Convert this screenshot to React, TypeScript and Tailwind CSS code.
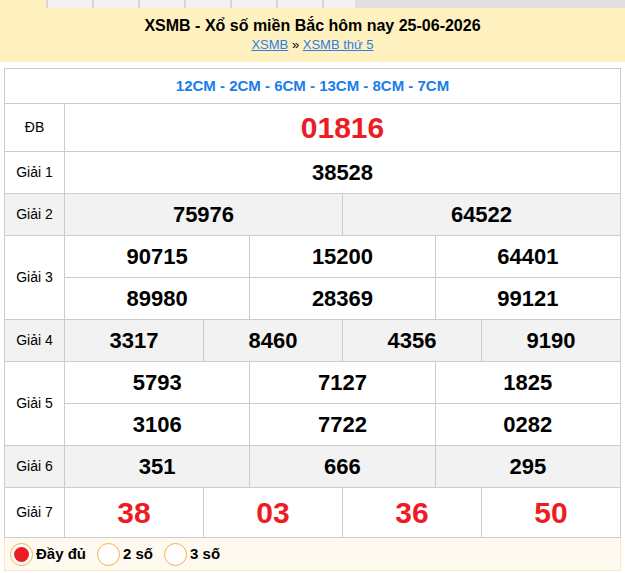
const font = { fontFamily: '"Liberation Sans", Arial, sans-serif' };

type Cell = { v: string; span: number };

const rows: { label: string; gray?: boolean; lines: Cell[][]; red?: boolean; h: string }[] = [
  { label: "ĐB", lines: [[{ v: "01816", span: 12 }]], red: true, h: "h-[48px]" },
  { label: "Giải 1", lines: [[{ v: "38528", span: 12 }]], h: "h-[42px]" },
  { label: "Giải 2", gray: true, lines: [[{ v: "75976", span: 6 }, { v: "64522", span: 6 }]], h: "h-[42px]" },
  {
    label: "Giải 3",
    lines: [
      [{ v: "90715", span: 4 }, { v: "15200", span: 4 }, { v: "64401", span: 4 }],
      [{ v: "89980", span: 4 }, { v: "28369", span: 4 }, { v: "99121", span: 4 }],
    ],
    h: "h-[42px]",
  },
  {
    label: "Giải 4",
    gray: true,
    lines: [[{ v: "3317", span: 3 }, { v: "8460", span: 3 }, { v: "4356", span: 3 }, { v: "9190", span: 3 }]],
    h: "h-[42px]",
  },
  {
    label: "Giải 5",
    lines: [
      [{ v: "5793", span: 4 }, { v: "7127", span: 4 }, { v: "1825", span: 4 }],
      [{ v: "3106", span: 4 }, { v: "7722", span: 4 }, { v: "0282", span: 4 }],
    ],
    h: "h-[42px]",
  },
  {
    label: "Giải 6",
    gray: true,
    lines: [[{ v: "351", span: 4 }, { v: "666", span: 4 }, { v: "295", span: 4 }]],
    h: "h-[42px]",
  },
  {
    label: "Giải 7",
    red: true,
    lines: [[{ v: "38", span: 3 }, { v: "03", span: 3 }, { v: "36", span: 3 }, { v: "50", span: 3 }]],
    h: "h-[50px]",
  },
];

function Radio({ checked, label }: { checked?: boolean; label: string }) {
  return (
    <label className="flex items-center gap-[3px] mr-[11px]">
      <span className="w-[23px] h-[23px] rounded-full border border-[#f5b041] bg-white flex items-center justify-center">
        {checked && <span className="w-[15px] h-[15px] rounded-full bg-[#ed1c24]" />}
      </span>
      <span className="text-[15px] font-bold text-black">{label}</span>
    </label>
  );
}

export default function App() {
  return (
    <div className="w-[625px] h-[573px] bg-white overflow-hidden" style={font}>
      {/* tabs strip */}
      <div className="flex h-[8px] bg-[#e0e0e0]">
        <div className="w-[46px] bg-[#fff1bf]" />
        {[46, 46, 46, 46, 46, 46, 33].map((w, i) => (
          <div key={i} style={{ width: w }} className="bg-[#f2f2f2] border-l-[2px] border-[#d6d6d6]" />
        ))}
      </div>

      {/* header */}
      <div className="bg-[#fff1bf] h-[54px] flex flex-col items-center pt-[7px]">
        <h1 className="text-[16px] font-bold text-black leading-[22px]">XSMB - Xổ số miền Bắc hôm nay 25-06-2026</h1>
        <div className="text-[13px] leading-[16px] text-black">
          <a className="text-[#2b7de9] underline">XSMB</a> » <a className="text-[#2b7de9] underline">XSMB thứ 5</a>
        </div>
      </div>

      <div className="px-[4px] pt-[6px]">
        <table className="w-full border-collapse table-fixed">
          <colgroup>
            <col className="w-[60px]" />
            {Array.from({ length: 12 }).map((_, i) => (
              <col key={i} />
            ))}
          </colgroup>
          <tbody>
            <tr className="h-[35px]">
              <td colSpan={13} className="border border-[#cccccc] text-center text-[15px] font-bold text-[#1a7de8]">
                12CM - 2CM - 6CM - 13CM - 8CM - 7CM
              </td>
            </tr>
            {rows.map((r) =>
              r.lines.map((line, li) => (
                <tr key={r.label + li} className={`${r.h} ${r.gray ? "bg-[#f2f2f2]" : "bg-white"}`}>
                  {li === 0 && (
                    <td rowSpan={r.lines.length} className="border border-[#cccccc] text-center text-[14px] text-black">
                      {r.label}
                    </td>
                  )}
                  {line.map((c, ci) => (
                    <td
                      key={ci}
                      colSpan={c.span}
                      className={`border border-[#cccccc] text-center font-bold p-0 ${
                        r.red ? "text-[#ed1c24] text-[30px]" : "text-black text-[22px]"
                      }`}
                    >
                      {c.v}
                    </td>
                  ))}
                </tr>
              ))
            )}
          </tbody>
        </table>
        <div className="h-[33px] bg-[#fffaef] border border-t-0 border-[#fde6c3] flex items-center pl-[5px]">
          <Radio checked label="Đầy đủ" />
          <Radio label="2 số" />
          <Radio label="3 số" />
        </div>
      </div>
    </div>
  );
}
